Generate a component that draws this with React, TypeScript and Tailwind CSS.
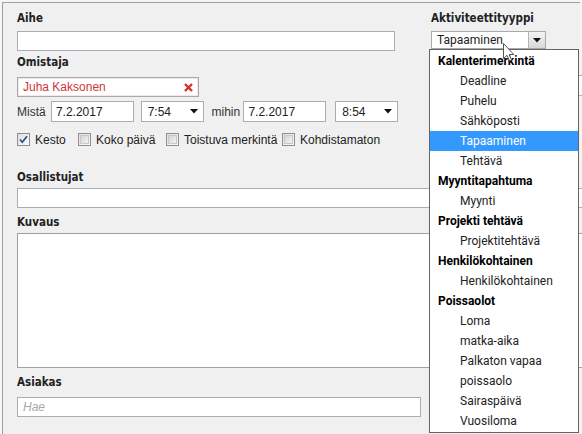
import React from "react";

const LABEL = "font-['DejaVu_Sans_Condensed','Liberation_Sans',sans-serif] font-bold text-[11.5px] leading-[14px] h-[14px] text-[#222]";
const ARIAL = "font-['Liberation_Sans',Arial,sans-serif]";
const SEGOE = "font-['Roboto','Noto_Sans',sans-serif]";

function Checkbox({ checked }: { checked?: boolean }) {
  return (
    <div className="w-[13px] h-[13px] shrink-0 border border-[#8e8f8f] bg-gradient-to-br from-[#dedede] to-[#fbfbfb] flex items-center justify-center">
      {checked ? (
        <svg width="11" height="11" viewBox="0 0 11 11">
          <path d="M2 5.5 L4.3 8.2 L9 2.2" fill="none" stroke="#2c4d90" strokeWidth="1.7" />
        </svg>
      ) : (
        <div className="w-[9px] h-[9px] border border-[#c8c8c8] bg-gradient-to-br from-[#d4d4d4] to-[#f4f4f4]" />
      )}
    </div>
  );
}

function Triangle() {
  return (
    <svg width="8" height="5" viewBox="0 0 8 5">
      <path d="M0 0 H8 L4 4.5 Z" fill="#111" />
    </svg>
  );
}

const groups: { title: string; items: string[] }[] = [
  { title: "Kalenterimerkintä", items: ["Deadline", "Puhelu", "Sähköposti", "Tapaaminen", "Tehtävä"] },
  { title: "Myyntitapahtuma", items: ["Myynti"] },
  { title: "Projekti tehtävä", items: ["Projektitehtävä"] },
  { title: "Henkilökohtainen", items: ["Henkilökohtainen"] },
  { title: "Poissaolot", items: ["Loma", "matka-aika", "Palkaton vapaa", "poissaolo", "Sairaspäivä", "Vuosiloma"] },
];

export default function App() {
  return (
    <div className="relative w-[582px] h-[434px] overflow-hidden bg-[#f5f5f5]">
      <div className="ml-[2px] mt-[2px] w-[578px] h-[432px] border-l border-t border-[#a0a0a0] bg-[#f0f0f0] pl-[14px] pt-[8px]">
        <div className="flex">
          {/* left column */}
          <div className="w-[381px] shrink-0">
            <div className={LABEL}>Aihe</div>
            <div className="mt-[6px] w-[378px] h-[20px] bg-white border border-[#abadb3]" />
            <div className={`${LABEL} mt-[4px]`}>Omistaja</div>
            <div className="mt-[8px] w-[182px] h-[20px] bg-white border border-[#a9a9a9] shadow-[inset_0_0_0_1px_#f6e6e6] flex items-center pl-[5px] pr-[5px]">
              <span className={`${ARIAL} text-[12px] text-[#d0353a] flex-1`}>Juha Kaksonen</span>
              <svg width="9" height="9" viewBox="0 0 9 9">
                <path d="M1 1 L8 8 M8 1 L1 8" stroke="#d6302b" strokeWidth="2.4" />
              </svg>
            </div>
            <div className={`${ARIAL} text-[12px] text-[#333] mt-[4px] h-[21px] flex items-center`}>
              <span className="w-[34px]">Mistä</span>
              <div className="w-[83px] h-[21px] bg-white border border-[#abadb3] flex items-center pl-[4px] text-[#222]">7.2.2017</div>
              <div className="ml-[7px] w-[63px] h-[21px] bg-white border border-[#abadb3] flex items-center pl-[6px] pr-[5px] text-[#222]">
                <span className="flex-1">7:54</span>
                <Triangle />
              </div>
              <span className="ml-[8px] w-[32px]">mihin</span>
              <div className="w-[83px] h-[21px] bg-white border border-[#abadb3] flex items-center pl-[4px] text-[#222]">7.2.2017</div>
              <div className="ml-[9px] w-[63px] h-[21px] bg-white border border-[#abadb3] flex items-center pl-[6px] pr-[5px] text-[#222]">
                <span className="flex-1">8:54</span>
                <Triangle />
              </div>
            </div>
            <div className={`${ARIAL} text-[12px] text-[#222] mt-[9px] h-[17px] flex items-center`}>
              <div className="w-[61px] flex items-center gap-[5px]"><Checkbox checked /><span>Kesto</span></div>
              <div className="w-[88px] flex items-center gap-[5px]"><Checkbox /><span>Koko päivä</span></div>
              <div className="w-[116px] flex items-center gap-[5px]"><Checkbox /><span>Toistuva merkintä</span></div>
              <div className="flex items-center gap-[5px] whitespace-nowrap"><Checkbox /><span>Kohdistamaton</span></div>
            </div>
          </div>
          {/* right column */}
          <div className="relative ml-[33px] w-[148px] shrink-0">
            <div className={LABEL}>Aktiviteettityyppi</div>
            <div className="mt-[6px] w-[115px] h-[18px] bg-white border border-[#a9a9a9] flex items-center">
              <span className={`${SEGOE} text-[12px] text-[#222] pl-[5px] flex-1`}>Tapaaminen</span>
              <div className="w-[17px] h-[16px] border-l border-[#b5b5b5] bg-gradient-to-b from-[#f4f4f4] to-[#d8d8d8] flex items-center justify-center">
                <Triangle />
              </div>
            </div>
            <div className="absolute left-0 top-[64px] w-[180px] h-[21px] border-y border-[#b0b0b0] bg-white" />
            <div className={`${SEGOE} absolute z-10 left-[-2px] top-[38px] w-[150px] h-[384px] bg-white border border-[#646464] py-[1px] text-[12px]`}>
              {groups.map((g) => (
                <React.Fragment key={g.title}>
                  <div className="h-[20px] leading-[20px] pl-[8px] font-bold text-black">{g.title}</div>
                  {g.items.map((it) => (
                    <div
                      key={g.title + it}
                      className={
                        it === "Tapaaminen"
                          ? "h-[20px] leading-[20px] pl-[30px] bg-[#3399ff] text-white"
                          : "h-[20px] leading-[20px] pl-[30px] text-[#222]"
                      }
                    >
                      {it}
                    </div>
                  ))}
                </React.Fragment>
              ))}
            </div>
          </div>
        </div>
        <div className={`${LABEL} mt-[22px]`}>Osallistujat</div>
        <div className="mt-[4px] w-[600px] h-[20px] bg-white border border-[#abadb3]" />
        <div className={`${LABEL} mt-[7px]`}>Kuvaus</div>
        <div className="mt-[4px] w-[600px] h-[135px] bg-white border border-[#a0a0a0]" />
        <div className={`${LABEL} mt-[7px]`}>Asiakas</div>
        <div className="mt-[8px] w-[404px] h-[20px] bg-white border border-[#abadb3] flex items-center pl-[5px]">
          <span className={`${ARIAL} italic text-[12px] text-[#a8a8a8]`}>Hae</span>
        </div>
      </div>
      <svg className="absolute left-[503px] top-[43px] z-20" width="12" height="19" viewBox="0 0 12 19">
        <path d="M0.5 0.5 L0.5 15.5 L4 12.3 L6.6 18 L8.6 17.1 L6.1 11.5 L10.8 11.5 Z" fill="#fff" stroke="#555" strokeWidth="1" />
      </svg>
    </div>
  );
}
